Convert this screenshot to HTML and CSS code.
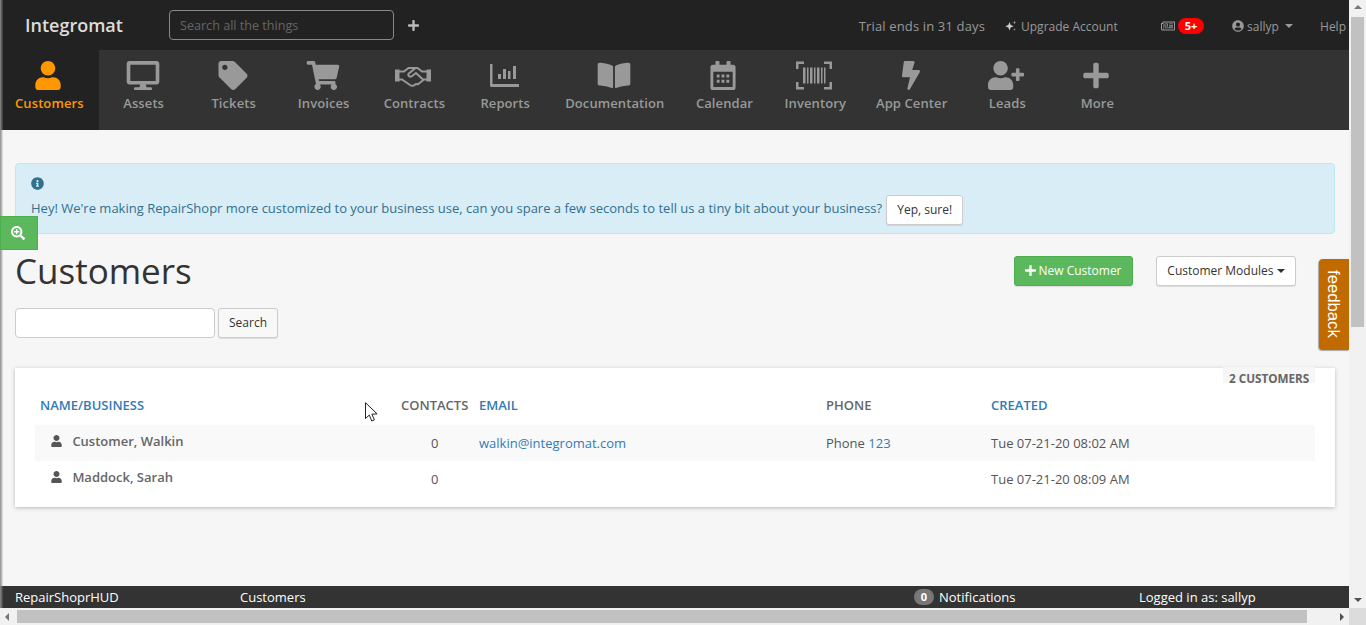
FILE: index.html
```html
<!DOCTYPE html>
<html lang="en">

<head>
    <meta charset="UTF-8">
    <title>Customers</title>
    <link rel="stylesheet" href="styles.css">
</head>

<body>
    <div class="window">
        <div class="page">
            <header class="topbar">
                <a class="brand">Integromat</a>
                <input class="global-search" type="text" placeholder="Search all the things">
                <svg class="top-plus" viewBox="0 0 448 512"><path d="M416 208H272V64c0-17.67-14.33-32-32-32h-32c-17.67 0-32 14.33-32 32v144H32c-17.67 0-32 14.33-32 32v32c0 17.67 14.33 32 32 32h144v144c0 17.67 14.33 32 32 32h32c17.67 0 32-14.33 32-32V304h144c17.67 0 32-14.33 32-32v-32c0-17.67-14.33-32-32-32z"/></svg>
                <div class="top-right">
                    <span class="trial">Trial ends in 31 days</span>
                    <span class="upgrade">
                        <svg class="sparkle" viewBox="0 0 24 24"><path d="M9 4l2.4 6.1L17.500 12.500l-6.100 2.400L9 21l-2.400-6.100L.5 12.500l6.100-2.400z"/><path d="M19 1l1.100 2.900L23 5l-2.900 1.100L19 9l-1.100-2.900L15 5l2.900-1.100z" opacity=".6"/><path d="M19 16l.9 2.100L22 19l-2.100.9L19 22l-.9-2.100L16 19l2.100-.9z" opacity=".5"/></svg>
                        Upgrade Account
                    </span>
                    <span class="news">
                        <svg class="news-icon" viewBox="0 0 28 20"><path fill-rule="evenodd" d="M4 1h23a1 1 0 0 1 1 1v15a2 2 0 0 1-2 2H3a3 3 0 0 1-3-3V4h3V2a1 1 0 0 1 1-1zm1 2v13a3 3 0 0 1-.2 1H26V3zM2 6v10a1 1 0 0 0 2 0V6z"/><path fill-rule="evenodd" d="M7 5h7v6H7zm1.500 1.500v3h4v-3zM16 5h8v1.500h-8zM16 8h8v1.500h-8zM16 11h8v1.500h-8zM7 13h17v1.500H7z"/></svg>
                        <span class="badge-red">5+</span>
                    </span>
                    <span class="user">
                        <svg class="user-circle" viewBox="0 0 496 512"><path d="M248 8C111 8 0 119 0 256s111 248 248 248 248-111 248-248S385 8 248 8zm0 96c48.600 0 88 39.400 88 88s-39.400 88-88 88-88-39.400-88-88 39.400-88 88-88zm0 344c-58.700 0-111.300-26.600-146.500-68.200 18.800-35.400 55.600-59.800 98.500-59.800 2.400 0 4.800.4 7.100 1.100 13 4.200 26.600 6.900 40.900 6.900 14.300 0 28-2.700 40.900-6.900 2.300-.7 4.700-1.100 7.100-1.100 42.900 0 79.700 24.400 98.500 59.800C359.300 421.400 306.700 448 248 448z"/></svg>
                        sallyp
                        <i class="caret"></i>
                    </span>
                    <span class="help">Help</span>
                </div>
            </header>

            <nav class="tabs">
                <a class="tab active">
                    <svg viewBox="0 0 448 512"><path d="M224 256c70.700 0 128-57.300 128-128S294.700 0 224 0 96 57.300 96 128s57.300 128 128 128zm89.600 32h-16.700c-22.200 10.200-46.900 16-72.900 16s-50.600-5.800-72.900-16h-16.700C60.200 288 0 348.200 0 422.400V464c0 26.500 21.500 48 48 48h352c26.500 0 48-21.500 48-48v-41.600c0-74.200-60.200-134.400-134.400-134.400z"/></svg>
                    Customers
                </a>
                <a class="tab">
                    <svg viewBox="0 0 576 512"><path d="M528 0H48C21.500 0 0 21.500 0 48v320c0 26.500 21.500 48 48 48h192l-16 48h-72c-13.300 0-24 10.700-24 24s10.700 24 24 24h272c13.300 0 24-10.700 24-24s-10.700-24-24-24h-72l-16-48h192c26.500 0 48-21.500 48-48V48c0-26.500-21.500-48-48-48zm-16 352H64V64h448v288z"/></svg>
                    Assets
                </a>
                <a class="tab">
                    <svg viewBox="0 0 512 512"><path d="M0 252.118V48C0 21.490 21.490 0 48 0h204.118a48 48 0 0 1 33.941 14.059l211.882 211.882c18.745 18.745 18.745 49.137 0 67.882L293.823 497.941c-18.745 18.745-49.137 18.745-67.882 0L14.059 286.059A48 48 0 0 1 0 252.118zM112 64c-26.510 0-48 21.490-48 48s21.490 48 48 48 48-21.490 48-48-21.490-48-48-48z"/></svg>
                    Tickets
                </a>
                <a class="tab">
                    <svg viewBox="0 0 576 512"><path d="M528.120 301.319l47.273-208C578.806 78.301 567.391 64 551.990 64H159.208l-9.166-44.810C147.758 8.021 137.930 0 126.529 0H24C10.745 0 0 10.745 0 24v16c0 13.255 10.745 24 24 24h69.883l70.248 343.435C147.325 417.100 136 435.222 136 456c0 30.928 25.072 56 56 56s56-25.072 56-56c0-15.674-6.447-29.835-16.824-40h209.647C430.447 426.165 424 440.326 424 456c0 30.928 25.072 56 56 56s56-25.072 56-56c0-22.172-12.888-41.332-31.579-50.405l5.517-24.276c3.413-15.018-8.002-29.319-23.403-29.319H218.117l-6.545-32h293.145c11.206 0 20.920-7.754 23.403-18.681z"/></svg>
                    Invoices
                </a>
                <a class="tab">
                    <svg class="icon-hands" viewBox="0 0 36 22">
                        <path d="M0 5h4.500v12H0zM31.500 5H36v12h-4.500z"/>
                        <path class="hands-line" d="M4 7h5l4.500-3.500h9L27 7h5M4 15h3l8 5.500c1.500 1 2.500 1 4 .3l2-1.300 2 .2 6-4.700h3M20 4l-6.500 5.300c-1 1.200 1.200 3.800 3 2.700L21 8.500l7.500 7"/>
                    </svg>
                    Contracts
                </a>
                <a class="tab">
                    <svg class="icon-reports" viewBox="0 0 29 23"><path d="M0 0h2.500v20H29v3H1.500A1.500 1.500 0 0 1 0 21.500z"/><path d="M8 10h3v5H8zM13 5h3v10h-3zM18 7h2.500v8H18zM23 2h3v13h-3z"/></svg>
                    Reports
                </a>
                <a class="tab">
                    <svg viewBox="0 0 576 512"><path d="M542.220 32.050c-54.800 3.110-163.720 14.430-230.960 55.590-4.640 2.840-7.270 7.890-7.270 13.170v363.870c0 11.550 12.630 18.850 23.280 13.490 69.180-34.820 169.230-44.320 218.700-46.920 16.890-.89 30.020-14.430 30.020-30.660V62.750c.01-17.710-15.350-31.740-33.770-30.700zM264.730 87.640C197.500 46.480 88.580 35.170 33.780 32.050 15.360 31.010 0 45.040 0 62.750V400.600c0 16.240 13.130 29.780 30.020 30.660 49.490 2.600 149.590 12.110 218.770 46.950 10.620 5.350 23.210-1.940 23.210-13.460V100.630c0-5.290-2.620-10.140-7.270-12.990z"/></svg>
                    Documentation
                </a>
                <a class="tab">
                    <svg viewBox="0 0 26 30"><path fill-rule="evenodd" d="M6 0h2.500a.8.8 0 0 1 .8.8V4h7.400V.8A.8.8 0 0 1 17.500 0H20a.8.8 0 0 1 .8.800V4h2.500A2.700 2.700 0 0 1 26 6.700v20.600a2.700 2.700 0 0 1-2.700 2.700H2.700A2.700 2.700 0 0 1 0 27.300V6.700A2.700 2.700 0 0 1 2.700 4h2.500V.8A.8.8 0 0 1 6 0zM3 11v15.600c0 .2.200.4.400.4h19.200c.2 0 .4-.2.400-.4V11z"/><path d="M6.500 14h3v3h-3zM11.500 14h3v3h-3zM16.500 14h3v3h-3zM6.500 19.500h3v3h-3zM11.500 19.500h3v3h-3zM16.500 19.500h3v3h-3z"/></svg>
                    Calendar
                </a>
                <a class="tab">
                    <svg viewBox="0 0 36 28"><path d="M0 0h8v2.500H2.500v5H0zM28 0h8v7.500h-2.500v-5H28zM0 20.500h2.500v5H8V28H0zM33.500 20.500H36V28h-8v-2.500h5.500z"/><path d="M7 6h2.500v16H7zM11 6h1.500v16H11zM14 6h2.500v16H14zM18 6h1.500v16H18zM21 6h2.500v16H21zM25 6h1.500v16H25zM28 6h1.500v16H28z"/></svg>
                    Inventory
                </a>
                <a class="tab">
                    <svg viewBox="0 0 320 512"><path d="M296 160H180.600l42.600-129.800C227.200 15 215.700 0 200 0H56C44 0 33.800 8.900 32.200 20.800l-32 240C-1.700 275.200 9.500 288 24 288h118.700L96.600 482.500c-3.600 15.200 8 29.500 23.300 29.500 8.400 0 16.400-4.400 20.800-12l176-304c9.300-15.900-2.200-36-20.700-36z"/></svg>
                    App Center
                </a>
                <a class="tab">
                    <svg viewBox="0 0 640 512"><path d="M624 208h-64v-64c0-8.800-7.200-16-16-16h-32c-8.800 0-16 7.200-16 16v64h-64c-8.800 0-16 7.200-16 16v32c0 8.800 7.200 16 16 16h64v64c0 8.800 7.200 16 16 16h32c8.800 0 16-7.200 16-16v-64h64c8.800 0 16-7.200 16-16v-32c0-8.800-7.200-16-16-16zm-400 48c70.700 0 128-57.300 128-128S294.700 0 224 0 96 57.300 96 128s57.300 128 128 128zm89.600 32h-16.700c-22.200 10.200-46.900 16-72.900 16s-50.600-5.800-72.900-16h-16.700C60.200 288 0 348.200 0 422.400V464c0 26.500 21.500 48 48 48h352c26.500 0 48-21.500 48-48v-41.600c0-74.200-60.200-134.400-134.400-134.400z"/></svg>
                    Leads
                </a>
                <a class="tab">
                    <svg viewBox="0 0 448 512"><path d="M416 208H272V64c0-17.670-14.330-32-32-32h-32c-17.670 0-32 14.330-32 32v144H32c-17.670 0-32 14.330-32 32v32c0 17.670 14.330 32 32 32h144v144c0 17.670 14.330 32 32 32h32c17.670 0 32-14.330 32-32V304h144c17.670 0 32-14.330 32-32v-32c0-17.670-14.330-32-32-32z"/></svg>
                    More
                </a>
            </nav>

            <main class="main">
                <div class="alert">
                    <svg class="info-icon" viewBox="0 0 512 512"><path d="M256 8C119.043 8 8 119.083 8 256c0 136.997 111.043 248 248 248s248-111.003 248-248C504 119.083 392.957 8 256 8zm0 110c23.196 0 42 18.804 42 42s-18.804 42-42 42-42-18.804-42-42 18.804-42 42-42zm56 254c0 6.627-5.373 12-12 12h-88c-6.627 0-12-5.373-12-12v-24c0-6.627 5.373-12 12-12h12v-64h-12c-6.627 0-12-5.373-12-12v-24c0-6.627 5.373-12 12-12h64c6.627 0 12 5.373 12 12v100h12c6.627 0 12 5.373 12 12v24z"/></svg>
                    <div class="alert-line">
                        <span class="alert-text">Hey! We're making RepairShopr more customized to your business use, can you spare a few seconds to tell us a tiny bit about your business?</span>
                        <button class="btn">Yep, sure!</button>
                    </div>
                </div>

                <div class="title-row">
                    <h1>Customers</h1>
                    <button class="btn btn-green">
                        <svg class="btn-plus" viewBox="0 0 448 512"><path d="M416 208H272V64c0-17.670-14.330-32-32-32h-32c-17.670 0-32 14.330-32 32v144H32c-17.670 0-32 14.330-32 32v32c0 17.670 14.330 32 32 32h144v144c0 17.670 14.330 32 32 32h32c17.670 0 32-14.330 32-32V304h144c17.670 0 32-14.330 32-32v-32c0-17.670-14.330-32-32-32z"/></svg>
                        New Customer
                    </button>
                    <button class="btn btn-modules">Customer Modules <i class="caret caret-dark"></i></button>
                </div>

                <form class="search-row">
                    <input class="search-input" type="text">
                    <button class="btn" type="button">Search</button>
                </form>

                <section class="card">
                    <span class="count">2 CUSTOMERS</span>
                    <table class="customers">
                        <thead>
                            <tr>
                                <th class="col-name"><a>NAME/BUSINESS</a></th>
                                <th class="col-contacts">CONTACTS</th>
                                <th class="col-email"><a>EMAIL</a></th>
                                <th class="col-phone">PHONE</th>
                                <th><a>CREATED</a></th>
                            </tr>
                        </thead>
                        <tbody>
                            <tr class="odd">
                                <td class="name">
                                    <svg class="person" viewBox="0 0 448 512"><path d="M224 256c70.700 0 128-57.300 128-128S294.700 0 224 0 96 57.300 96 128s57.300 128 128 128zm89.600 32h-16.700c-22.200 10.200-46.900 16-72.900 16s-50.600-5.800-72.900-16h-16.700C60.200 288 0 348.200 0 422.400V464c0 26.500 21.500 48 48 48h352c26.500 0 48-21.500 48-48v-41.600c0-74.200-60.200-134.400-134.400-134.400z"/></svg>
                                    Customer, Walkin
                                </td>
                                <td class="num">0</td>
                                <td><a>walkin@integromat.com</a></td>
                                <td>Phone <a>123</a></td>
                                <td>Tue 07-21-20 08:02 AM</td>
                            </tr>
                            <tr>
                                <td class="name">
                                    <svg class="person" viewBox="0 0 448 512"><path d="M224 256c70.700 0 128-57.300 128-128S294.700 0 224 0 96 57.300 96 128s57.300 128 128 128zm89.600 32h-16.700c-22.200 10.200-46.900 16-72.900 16s-50.600-5.800-72.900-16h-16.700C60.200 288 0 348.200 0 422.400V464c0 26.500 21.500 48 48 48h352c26.500 0 48-21.500 48-48v-41.600c0-74.200-60.200-134.400-134.400-134.400z"/></svg>
                                    Maddock, Sarah
                                </td>
                                <td class="num">0</td>
                                <td></td>
                                <td></td>
                                <td>Tue 07-21-20 08:09 AM</td>
                            </tr>
                        </tbody>
                    </table>
                </section>
            </main>

            <footer class="hud">
                <span>RepairShoprHUD</span>
                <span>Customers</span>
                <span class="hud-notes"><b class="badge-grey">0</b> Notifications</span>
                <span>Logged in as: sallyp</span>
            </footer>
        </div>

        <div class="scroll-v">
            <i class="arrow arrow-up"></i>
            <div class="thumb-v"></div>
            <i class="arrow arrow-down"></i>
        </div>
        <div class="scroll-h">
            <i class="arrow arrow-left"></i>
            <div class="thumb-h"></div>
            <i class="arrow arrow-right"></i>
        </div>
        <div class="scroll-corner"></div>
    </div>

    <div class="edge-shade"></div>
    <a class="zoom-tab">
        <svg viewBox="0 0 512 512"><path d="M304 192v32c0 6.600-5.400 12-12 12h-56v56c0 6.600-5.400 12-12 12h-32c-6.600 0-12-5.400-12-12v-56h-56c-6.600 0-12-5.400-12-12v-32c0-6.600 5.400-12 12-12h56v-56c0-6.600 5.400-12 12-12h32c6.600 0 12 5.400 12 12v56h56c6.600 0 12 5.400 12 12zm201 284.700L476.700 505c-9.400 9.400-24.600 9.400-33.900 0L343 405.300c-4.500-4.500-7-10.600-7-17V372c-35.300 27.600-79.700 44-128 44C93.100 416 0 322.900 0 208S93.100 0 208 0s208 93.100 208 208c0 48.300-16.400 92.700-44 128h16.300c6.400 0 12.500 2.500 17 7l99.700 99.700c9.300 9.400 9.300 24.600 0 34zM344 208c0-75.200-60.800-136-136-136S72 132.800 72 208s60.800 136 136 136 136-60.800 136-136z"/></svg>
    </a>
    <a class="feedback-tab">feedback</a>
    <svg class="cursor" viewBox="0 0 13 20"><path d="M.5.700v15.800l3.800-3.400 2.500 5.900 2.600-1.100-2.500-5.700 5.200-.3z"/></svg>
</body>

</html>
```

FILE: styles.css
```css
* {
    box-sizing: border-box;
}

body {
    margin: 0;
    width: 1366px;
    height: 625px;
    overflow: hidden;
    font-family: "Open Sans", sans-serif;
    font-size: 13px;
    color: #555;
    background: #f6f6f6;
}

.window {
    display: grid;
    grid-template-columns: 1349px 17px;
    grid-template-rows: 608px 17px;
    height: 625px;
}

.page {
    display: flex;
    flex-direction: column;
    min-width: 0;
}

/* top bar */
.topbar {
    display: flex;
    align-items: center;
    height: 50px;
    padding-left: 25px;
    background: #222;
    color: #999;
}

.brand {
    width: 144px;
    font-size: 18px;
    font-weight: 600;
    color: #ddd;
}

.global-search {
    width: 225px;
    height: 30px;
    padding: 0 10px;
    background: transparent;
    border: 1px solid #888;
    border-radius: 4px;
    font-family: inherit;
    font-size: 12.6px;
    color: #ccc;
}

.global-search::placeholder {
    color: #666;
    opacity: 1;
}

.top-plus {
    width: 11px;
    height: 13px;
    margin-left: 14px;
    fill: #bbb;
}

.top-right {
    display: flex;
    align-items: center;
    margin-left: auto;
    padding: 2px 3px 0 0;
}

.trial {
    margin-right: 20px;
    letter-spacing: 0.15px;
}

.upgrade {
    display: flex;
    align-items: center;
    gap: 4px;
    width: 156px;
    font-size: 12px;
}

.sparkle {
    width: 12px;
    height: 12px;
    fill: #ccc;
}

.news {
    display: flex;
    align-items: center;
    gap: 3px;
    width: 71px;
}

.news-icon {
    width: 14px;
    height: 10px;
    fill: #999;
}

.badge-red {
    width: 26px;
    height: 16px;
    border-radius: 8px;
    background: #f00;
    color: #fff;
    font-size: 11px;
    font-weight: 700;
    line-height: 16px;
    text-align: center;
}

.user {
    display: flex;
    align-items: center;
    gap: 3px;
    width: 88px;
    font-size: 12px;
}

.user-circle {
    width: 12px;
    height: 12px;
    fill: #999;
}

.caret {
    display: inline-block;
    margin-left: 3px;
    border-top: 4px solid #999;
    border-left: 4px solid transparent;
    border-right: 4px solid transparent;
}

.caret-dark {
    margin-left: 0;
    vertical-align: 2px;
    border-top-color: #333;
}

.help {
    font-size: 12px;
}

/* main nav */
.tabs {
    display: flex;
    height: 80px;
    background: #333;
}

.tab {
    display: flex;
    flex-direction: column;
    align-items: center;
    min-width: 90px;
    padding: 11px 15px 0;
    font-size: 13px;
    font-weight: 600;
    letter-spacing: 0.1px;
    line-height: 18px;
    color: #999;
}

.tab svg {
    width: 36px;
    height: 29px;
    margin: 0 2px 4px 0;
    fill: #999;
}

.tab .icon-reports {
    width: 29px;
    height: 23px;
    margin: 3px 2px 7px 0;
}

.hands-line {
    fill: none;
    stroke: #999;
    stroke-width: 2;
}

.tab.active {
    background: #222;
    color: #ff9800;
}

.tab.active svg {
    fill: #ff9800;
}

/* content */
.main {
    flex: 1;
    padding: 33px 14px 0 15px;
    background: #f6f6f6;
}

.alert {
    height: 71px;
    padding: 13px 15px 0;
    background: #d9edf7;
    border: 1px solid #bce8f1;
    border-radius: 4px;
    color: #31708f;
}

.info-icon {
    display: block;
    width: 13px;
    height: 13px;
    fill: #31708f;
}

.alert-line {
    display: flex;
    align-items: center;
    gap: 4px;
    margin-top: 5px;
}

.alert-text {
    margin-bottom: 4px;
}

.btn {
    height: 30px;
    padding: 0 0 2px;
    background: #fff;
    border: 1px solid #ccc;
    border-radius: 3px;
    box-shadow: 0 1px 1px rgba(0, 0, 0, 0.1);
    font-family: inherit;
    font-size: 12px;
    color: #333;
}

.alert-line .btn {
    width: 77px;
}

.title-row {
    display: flex;
    align-items: center;
    height: 30px;
    margin-top: 22px;
    padding-right: 39px;
}

h1 {
    margin: 0 auto 0 0;
    font-size: 35px;
    font-weight: 400;
    line-height: 30px;
    color: #333;
}

.btn-green {
    display: flex;
    align-items: center;
    justify-content: center;
    gap: 2px;
    width: 119px;
    background: #5cb85c;
    border-color: #4cae4c;
    color: #fff;
    font-weight: 500;
}

.btn-plus {
    width: 11px;
    height: 13px;
    fill: #fff;
}

.btn-modules {
    width: 140px;
    margin-left: 23px;
}

.search-row {
    display: flex;
    gap: 3px;
    margin-top: 22px;
}

.search-input {
    width: 200px;
    height: 30px;
    background: #fff;
    border: 1px solid #ccc;
    border-radius: 4px;
}

.search-row .btn {
    width: 60px;
    background: #f8f8f8;
}

.card {
    position: relative;
    height: 139px;
    margin-top: 30px;
    padding: 17px 20px 0;
    background: #fff;
    box-shadow: 0 1px 4px rgba(0, 0, 0, 0.25);
}

.count {
    position: absolute;
    top: -1px;
    right: 20px;
    width: 92px;
    height: 16px;
    padding-left: 6px;
    background: #f6f6f6;
    font-size: 11.7px;
    font-weight: 700;
    line-height: 23px;
    color: #666;
}

.customers {
    width: 100%;
    table-layout: fixed;
    border-collapse: collapse;
}

.customers th {
    height: 40px;
    padding: 0 5px;
    text-align: left;
    font-size: 13px;
    font-weight: 600;
    color: #666;
    white-space: nowrap;
}

.col-name {
    width: 361px;
}

.col-contacts {
    width: 78px;
}

.col-email {
    width: 347px;
}

.col-phone {
    width: 165px;
}

.customers a {
    color: #337ab7;
}

.customers td {
    height: 36px;
    padding: 0 5px;
}

.customers tr.odd td {
    background: #f9f9f9;
}

.customers td.name {
    padding-left: 16px;
    padding-bottom: 4px;
    font-weight: 600;
    color: #666;
}

.customers td.num {
    padding-left: 35px;
}

.person {
    width: 11px;
    height: 12px;
    margin-right: 7px;
    vertical-align: -1px;
    fill: #555;
}

/* bottom bar */
.hud {
    display: grid;
    grid-template-columns: 225px 674px 225px auto;
    align-items: center;
    height: 22px;
    padding-left: 15px;
    background: #333;
    color: #fff;
}

.hud-notes {
    display: flex;
    align-items: center;
    gap: 5px;
}

.badge-grey {
    width: 20px;
    height: 16px;
    border-radius: 8px;
    background: #777;
    font-size: 11px;
    line-height: 16px;
    text-align: center;
}

/* window scrollbars */
.scroll-v {
    display: flex;
    flex-direction: column;
    align-items: center;
    background: #f1f1f1;
}

.thumb-v {
    width: 13px;
    height: 310px;
    margin-bottom: auto;
    background: #c1c1c1;
}

.scroll-h {
    display: flex;
    align-items: center;
    background: #f1f1f1;
}

.thumb-h {
    width: 1290px;
    height: 13px;
    background: #c1c1c1;
}

.scroll-corner {
    background: #dcdcdc;
}

.arrow {
    display: block;
    flex: none;
    width: 0;
    height: 0;
    border: 4px solid transparent;
}

.arrow-up {
    margin: 5px 0 8px;
    border-top: 0;
    border-bottom-color: #777;
}

.arrow-down {
    margin-bottom: 6px;
    border-bottom: 0;
    border-top-color: #505050;
}

.arrow-left {
    margin: 0 8px 0 5px;
    border-left: 0;
    border-right-color: #777;
}

.arrow-right {
    margin-left: 33px;
    border-right: 0;
    border-left-color: #505050;
}

/* things lying over the page */
.edge-shade {
    position: absolute;
    top: 0;
    left: 0;
    width: 3px;
    height: 608px;
    background: linear-gradient(to right, #8a8a8a, rgba(160, 160, 160, 0.15));
}

.zoom-tab {
    position: absolute;
    top: 216px;
    left: 0;
    display: flex;
    align-items: center;
    justify-content: center;
    width: 38px;
    height: 34px;
    padding-right: 2px;
    background: #5cb85c;
    border: 1px solid #4cae4c;
}

.zoom-tab svg {
    width: 14px;
    height: 14px;
    fill: #fff;
}

.feedback-tab {
    position: absolute;
    top: 259px;
    left: 1319px;
    width: 30px;
    height: 91px;
    padding: 11px 3px 0 0;
    background: #c06a00;
    border-radius: 4px 0 0 4px;
    box-shadow: -1px 1px 1px rgba(0, 0, 0, 0.3), 0 0 0 1px #f2f2f2;
    writing-mode: vertical-rl;
    font-family: "Liberation Sans", sans-serif;
    font-size: 16.7px;
    line-height: 25px;
    color: #fff;
}

.cursor {
    position: absolute;
    top: 402px;
    left: 365px;
    width: 13px;
    height: 20px;
    fill: #fff;
    stroke: #222;
    stroke-width: 1;
}
```
